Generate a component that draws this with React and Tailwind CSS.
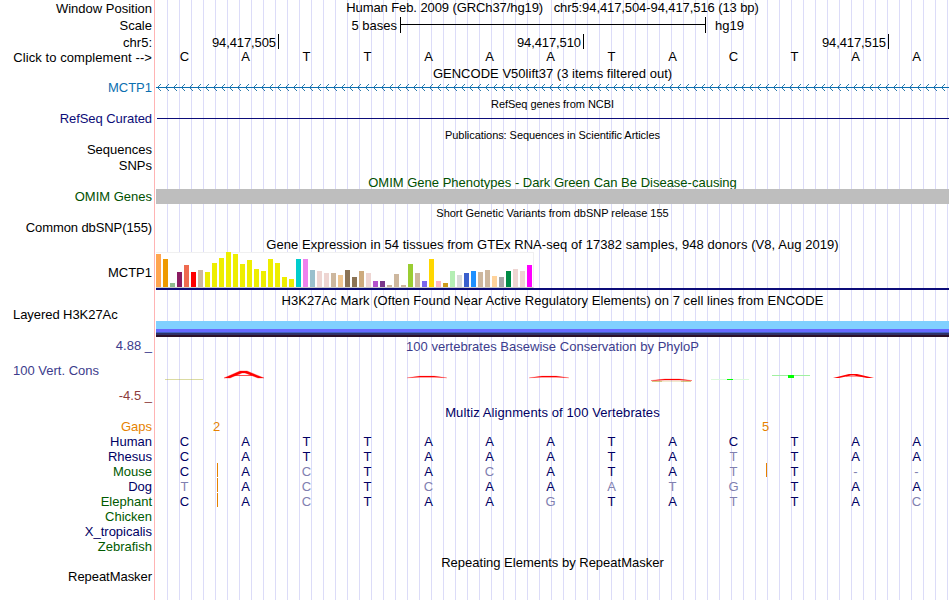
import React from 'react';

const BASES = 'CATTAAATACTAA';

// label, classes (height + top margin + colour)
const LABELS = [
    ['Window Position', 'h-[17px]'],
    ['Scale', 'h-[17px]'],
    ['chr5:', 'h-[17px]'],
    ['Click to complement -->', 'h-[15px] -mt-px tracking-[0.08px]'],
    ['MCTP1', 'mt-[15px] h-[15px] text-[#0c6fb0]'],
    ['RefSeq Curated', 'mt-[16px] h-[15px] text-[#0c0c78] tracking-[-0.07px]'],
    ['Sequences', 'mt-[16px] h-[15px]'],
    ['SNPs', 'mt-px h-[15px]'],
    ['OMIM Genes', 'mt-[16px] h-[15px] text-[#005000]'],
    ['Common dbSNP(155)', 'mt-[16px] h-[15px] tracking-[-0.1px]'],
    ['MCTP1', 'mt-[30px] h-[15px]'],
    ['Layered H3K27Ac', 'mt-[27px] h-[15px] justify-start! pl-[13px] tracking-[-0.06px]'],
    ['4.88 _', 'mt-[16px] h-[15px] text-[#3c3c8c]'],
    ['100 Vert. Cons', 'mt-[10px] h-[15px] justify-start! pl-[13px] text-[#3c3c8c]'],
    ['-4.5 _', 'mt-[10px] h-[15px] text-[#8c3c3c]'],
    ['Gaps', 'mt-[16px] h-[15px] text-[#e68200]'],
    ['Human', 'h-[15px] text-[#000064]'],
    ['Rhesus', 'h-[15px] text-[#000064]'],
    ['Mouse', 'h-[15px] text-[#005a00]'],
    ['Dog', 'h-[15px] text-[#000064]'],
    ['Elephant', 'h-[15px] text-[#005a00]'],
    ['Chicken', 'h-[15px] text-[#005a00]'],
    ['X_tropicalis', 'h-[15px] text-[#000064]'],
    ['Zebrafish', 'h-[15px] text-[#005a00]'],
    ['RepeatMasker', 'mt-[15px] h-[15px] tracking-[-0.05px]'],
];

// GTEx tissues: [height, colour]
const TISSUES = [
    [33, '#ffa54f'], [28, '#ee9a00'], [4, '#8fbc8f'], [15, '#8b1c62'], [22, '#ee6a50'],
    [15, '#ff0000'], [17, '#cdb79e'], [15, '#eeee00'], [24, '#eeee00'], [29, '#eeee00'],
    [35, '#eeee00'], [33, '#eeee00'], [23, '#eeee00'], [27, '#eeee00'], [18, '#eeee00'],
    [16, '#eeee00'], [28, '#eeee00'], [24, '#eeee00'], [10, '#eeee00'], [8, '#eeee00'],
    [28, '#00cdcd'], [28, '#ee82ee'], [17, '#9ac0cd'], [16, '#eed5d2'], [14, '#eed5d2'],
    [14, '#cdb79e'], [12, '#eec591'], [17, '#8b7355'], [10, '#8b7355'], [16, '#cdaa7d'],
    [14, '#eed5d2'], [6, '#b452cd'], [6, '#7a378b'], [2, '#cdb79e'], [13, '#cdb79e'],
    [2, '#cdb79e'], [23, '#9acd32'], [14, '#cdb79e'], [6, '#7a67ee'], [28, '#ffd700'],
    [6, '#ffb6c1'], [4, '#cd9b1d'], [16, '#b4eeb4'], [12, '#d9d9d9'], [14, '#3a5fcd'],
    [16, '#1e90ff'], [15, '#cdb79e'], [17, '#cdb79e'], [11, '#ffd39b'], [10, '#a6a6a6'],
    [16, '#008b45'], [18, '#eed5d2'], [16, '#eed5d2'], [22, '#ff00ff'],
];

// lower case = mismatch with human, drawn faded
const ALIGNMENTS = [
    { name: 'Human', seq: 'CATTAAATACTAA', inserts: [] },
    { name: 'Rhesus', seq: 'CATTAAATAtTAA', inserts: [] },
    { name: 'Mouse', seq: 'CAcTAcATAtT--', inserts: [61, 610] },
    { name: 'Dog', seq: 'tAcTcAAatgTAA', inserts: [61] },
    { name: 'Elephant', seq: 'CAcTAAgTAtTAc', inserts: [61] },
];

const Title = ({ children, className }) => (
    <div className={`flex h-[15px] shrink-0 items-center justify-center whitespace-pre ${className}`}>{children}</div>
);

const Row = ({ seq }) => (
    <div className="-ml-0.5 grid h-[15px] w-[793px] grid-cols-13 items-center text-center">
        {seq.split('').map((base, i) => (
            <span key={i} className={base === '-' || base !== base.toUpperCase() ? 'text-[#8080b0]' : ''}>
                {base.toUpperCase()}
            </span>
        ))}
    </div>
);

const Ruler = () => (
    <>
        <div className="mt-[2px] flex h-[16px] items-center">
            <span className="w-[241px] text-right">5 bases</span>
            <svg className="ml-[3px] h-[16px] w-[306px]" viewBox="0 0 306 16" shapeRendering="crispEdges">
                <path d="M0.5 0v16M305.5 0v16M0 7.5h306" stroke="#000" />
            </svg>
            <span className="ml-[9px]">hg19</span>
        </div>
        <div className="flex h-[16px] items-start pt-px">
            {['94,417,505', '94,417,510', '94,417,515'].map((pos, i) => (
                <div
                    key={pos}
                    className={`flex h-[15px] items-center justify-end border-r border-black pt-[2px] pr-[2px] tracking-[-0.1px] ${i === 0 ? 'w-[123px]' : 'w-[305px]'}`}
                >
                    {pos}
                </div>
            ))}
        </div>
    </>
);

const GeneArrows = () => (
    <svg className="mt-[3px] h-[7px] w-[793px]" viewBox="0 0 793 7" shapeRendering="crispEdges">
        <path d="M0 3.5h793" stroke="#0c6fb0" />
        {Array.from({ length: 99 }, (_, i) => (
            <path
                key={i}
                d={`M${i * 8 + 2} 2.5h1m0 -1h1m0 -1h1M${i * 8 + 2} 4.5h1m0 1h1m0 1h1`}
                fill="none"
                stroke="#2c7cac"
            />
        ))}
    </svg>
);

const Expression = () => (
    <div className="flex h-[36px] w-[378px] items-end gap-[2px] border-t border-r border-b border-t-[#f0f0f0] border-r-[#f0f0f0] border-b-[#c8c8c8] bg-white">
        {TISSUES.map(([height, color], i) => (
            <div key={i} className="w-[5px] shrink-0" style={{ height, backgroundColor: color }} />
        ))}
    </div>
);

const Conservation = () => (
    <svg className="h-[51px] w-[793px]" viewBox="156 354 793 51">
        <path d="M165 379.5h38" stroke="#b4b43c" strokeOpacity="0.6" strokeWidth="0.8" />
        <path d="M224 378l16-7h7l17 7h-6l-13-5h-3l-12 5z" fill="#f00" stroke="#f00" strokeWidth="0.3" />
        <path d="M234 375.5h18" stroke="#f00" strokeWidth="0.7" />
        <path d="M407 377.8l13-1.7h14l13 1.7l-13-0.6h-14z" fill="#f00" stroke="#f00" strokeWidth="0.2" />
        <path d="M529 377.8l13-1.7h14l13 1.7l-13-0.6h-14z" fill="#f00" stroke="#f00" strokeWidth="0.2" />
        <path d="M652 381.3h10M681 381.3h10" stroke="#b4a028" strokeWidth="0.9" strokeOpacity="0.8" />
        <path d="M662 381.3h19" stroke="#b4a028" strokeWidth="0.7" strokeOpacity="0.4" />
        <path d="M651 380.6l14-1.5h14l13 1.5l-13-0.5h-14z" fill="#f00" stroke="#f00" strokeWidth="0.3" />
        <path d="M711 379.5h38" stroke="#dcfadc" />
        <path d="M727 379.5h6" stroke="#0f0" />
        <path d="M772 375.5h38" stroke="#a0f0a0" />
        <path d="M788 375h6v3h-6z" fill="#0f0" />
        <path d="M833 378l16-4h8l17 4h-7l-13-2.6h-3l-12 2.6z" fill="#f00" />
        <path d="M846 376.5h17" stroke="#f00" strokeWidth="0.4" />
    </svg>
);

export default function App() {
    return (
        <div className="flex h-[600px] w-[950px] overflow-hidden bg-white font-['Liberation_Sans',Arial,sans-serif] text-[13px] leading-[15px] text-black">
            <div className="w-[155px] shrink-0 border-r border-[#ffb4b4]">
                {LABELS.map(([text, cls], i) => (
                    <div key={i} className={`flex items-center justify-end whitespace-nowrap pr-[2px] ${cls}`}>
                        {text}
                    </div>
                ))}
            </div>

            <div className="ml-px flex w-[793px] flex-col bg-[repeating-linear-gradient(to_right,transparent_0_11px,#dcdcf8_11px_12px)]">
                <Title className="tracking-[-0.09px]">
                    {'Human Feb. 2009 (GRCh37/hg19)   chr5:94,417,504-94,417,516 (13 bp)'}
                </Title>
                <Ruler />
                <Row seq={BASES} />
                <Title className="mt-[2px] tracking-[0.02px]">GENCODE V50lift37 (3 items filtered out)</Title>
                <GeneArrows />
                <Title className="mt-[6px] text-[11px] tracking-[-0.05px]">RefSeq genes from NCBI</Title>
                <div className="mt-[6px] ml-px h-px bg-[#0c0c78]" />
                <Title className="mt-[9px] text-[11px] tracking-[-0.06px]">
                    Publications: Sequences in Scientific Articles
                </Title>
                <Title className="mt-[32px] text-[#005000]">OMIM Gene Phenotypes - Dark Green Can Be Disease-causing</Title>
                <div className="-mt-px h-[15px] bg-[#bebebe]" />
                <Title className="mt-[2px] text-[11px] tracking-[-0.02px]">Short Genetic Variants from dbSNP release 155</Title>
                <Title className="mt-[16px] tracking-[0.057px]">
                    Gene Expression in 54 tissues from GTEx RNA-seq of 17382 samples, 948 donors (V8, Aug 2019)
                </Title>
                <Expression />
                <div className="h-[2px] bg-[#0c0c78]" />
                <Title className="mt-[3px] tracking-[0.05px]">
                    H3K27Ac Mark (Often Found Near Active Regulatory Elements) on 7 cell lines from ENCODE
                </Title>
                <div className="mt-[13px] h-[8px] bg-[#80d0ff]" />
                <div className="h-[3px] bg-[#6868ff]" />
                <div className="h-[1px] bg-[#4060c0]" />
                <div className="h-[2px] bg-[#303068]" />
                <div className="h-[2px] bg-[#2c1028]" />
                <Title className="mt-[2px] text-[#3c3c8c] tracking-[0.02px]">
                    100 vertebrates Basewise Conservation by PhyloP
                </Title>
                <Conservation />
                <Title className="text-[#000064] tracking-[0.1px]">Multiz Alignments of 100 Vertebrates</Title>
                <div className="-mt-px flex h-[15px] items-center text-[#e68200]">
                    <span className="w-[121px] text-center">2</span>
                    <span className="ml-[428px] w-[121px] text-center">5</span>
                </div>
                <div className="text-[#000064]">
                    {ALIGNMENTS.map((row) => (
                        <div key={row.name} className="relative">
                            <Row seq={row.seq} />
                            {row.inserts.map((x) => (
                                <div key={x} className="absolute -top-px h-[14px] w-px bg-[#e68200]" style={{ left: x }} />
                            ))}
                        </div>
                    ))}
                </div>
                <Title className="mt-[46px]">Repeating Elements by RepeatMasker</Title>
            </div>
        </div>
    );
}
